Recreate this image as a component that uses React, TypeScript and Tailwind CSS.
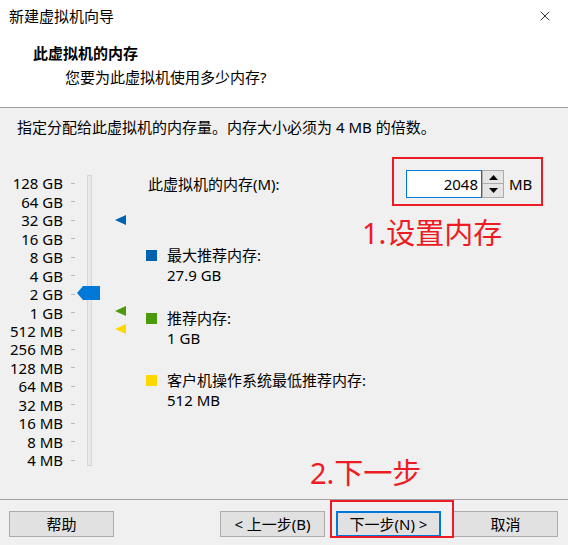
import { X } from "lucide-react";

const SCALE = [
  "128 GB",
  "64 GB",
  "32 GB",
  "16 GB",
  "8 GB",
  "4 GB",
  "2 GB",
  "1 GB",
  "512 MB",
  "256 MB",
  "128 MB",
  "64 MB",
  "32 MB",
  "16 MB",
  "8 MB",
  "4 MB",
];

const LEGEND = [
  { label: "最大推荐内存:", value: "27.9 GB", color: "bg-[#0063b1]", mt: "mt-[47px]" },
  { label: "推荐内存:", value: "1 GB", color: "bg-[#4a9a0a]", mt: "mt-[23px]" },
  { label: "客户机操作系统最低推荐内存:", value: "512 MB", color: "bg-[#ffd800]", mt: "mt-[22px]" },
];

function Marker({ color, className }: { color: string; className: string }) {
  return (
    <svg className={`absolute ${className}`} width="11" height="10" viewBox="0 0 11 10">
      <polygon points="0,5 11,0 11,10" fill={color} />
    </svg>
  );
}

function Button({ label, primary }: { label: string; primary?: boolean }) {
  return (
    <div
      className={`flex h-[26px] w-[105px] items-center justify-center bg-[#e1e1e1] text-[15px] leading-[20px] text-black ${
        primary ? "border-2 border-[#0078d7]" : "border border-[#adadad]"
      }`}
    >
      {label}
    </div>
  );
}

export default function App() {
  return (
    <div
      className="relative flex h-[545px] w-[568px] flex-col overflow-hidden bg-[#f0f0f0] text-black"
      style={{ fontFamily: '"Noto Sans", "Noto Sans CJK SC", sans-serif' }}
    >
      {/* Header */}
      <div className="h-[108px] border-b border-[#a0a0a0] bg-white">
        <div className="flex h-[32px] items-center justify-between pl-[9px] pr-[15px]">
          <span className="text-[15px] leading-[20px]">新建虚拟机向导</span>
          <X size={16} strokeWidth={1.2} className="text-black" />
        </div>
        <div className="mt-[11px] pl-[33px] text-[15px] font-bold leading-[20px]">此虚拟机的内存</div>
        <div className="mt-[4px] pl-[65px] text-[15px] leading-[20px]">您要为此虚拟机使用多少内存?</div>
      </div>

      <div className="mt-[9px] pl-[17px] text-[15px] leading-[20px]">
        指定分配给此虚拟机的内存量。内存大小必须为 4 MB 的倍数。
      </div>

      {/* Main */}
      <div className="flex h-[362px] flex-row">
        <div className="relative mt-[37px] w-[130px] self-start">
          <div className="absolute left-[87px] top-[1px] h-[291px] w-[5px] border border-[#d6d6d6] bg-[#e7eaea]" />
          {SCALE.map((s) => (
            <div key={s} className="flex h-[18.47px] items-center">
              <span className="w-[63px] whitespace-nowrap text-right text-[15px] leading-[18px]">{s}</span>
              <span className="ml-[8px] h-px w-[4px] bg-[#b9b9b9]" />
            </div>
          ))}
          <svg className="absolute left-[77px] top-[112px]" width="23" height="14" viewBox="0 0 23 14">
            <polygon points="0,7 6,0 23,0 23,14 6,14" fill="#0078d7" />
          </svg>
          <Marker color="#0063b1" className="left-[115px] top-[41px]" />
          <Marker color="#4a9a0a" className="left-[115px] top-[132px]" />
          <Marker color="#ffd800" className="left-[115px] top-[150px]" />
        </div>

        <div className="flex flex-col pl-[16px]">
          <div className="mt-[33px] flex h-[28px] items-center">
            <span className="ml-[2px] w-[258px] text-[15px] leading-[20px]">此虚拟机的内存(M):</span>
            <div className="flex h-[28px] w-[76px] items-center justify-end border border-[#0078d7] bg-white pr-[3px] text-[15px] leading-[20px]">
              2048
            </div>
            <div className="flex h-[28px] w-[22px] flex-col">
              <div className="flex h-[14px] items-center justify-center border border-[#acacac] bg-[#e5e5e5]">
                <svg width="9" height="5" viewBox="0 0 9 5">
                  <polygon points="4.5,0 9,5 0,5" fill="#000" />
                </svg>
              </div>
              <div className="flex h-[14px] items-center justify-center border border-t-0 border-[#acacac] bg-[#e5e5e5]">
                <svg width="9" height="5" viewBox="0 0 9 5">
                  <polygon points="0,0 9,0 4.5,5" fill="#000" />
                </svg>
              </div>
            </div>
            <span className="ml-[5px] text-[15px] leading-[20px]">MB</span>
          </div>

          {LEGEND.map((l) => (
            <div key={l.label} className={`flex items-start gap-[10px] ${l.mt}`}>
              <span className={`mt-[5px] h-[11px] w-[11px] ${l.color}`} />
              <div className="flex flex-col text-[15px] leading-[20px]">
                <span>{l.label}</span>
                <span>{l.value}</span>
              </div>
            </div>
          ))}
        </div>
      </div>

      {/* Footer */}
      <div className="flex flex-1 items-start border-t border-[#a0a0a0] pl-[9px] pt-[11px]">
        <Button label="帮助" />
        <div className="ml-[106px]">
          <Button label="< 上一步(B)" />
        </div>
        <div className="ml-[11px]">
          <Button label="下一步(N) >" primary />
        </div>
        <div className="ml-[12px]">
          <Button label="取消" />
        </div>
      </div>

      {/* Annotations */}
      <div className="absolute left-[392px] top-[157px] h-[49px] w-[151px] border-2 border-[#ed1c24]" />
      <div className="absolute left-[362px] top-[218px] whitespace-nowrap text-[29px] leading-[30px] text-[#ed1c24]">
        1.设置内存
      </div>
      <div className="absolute left-[310px] top-[458px] whitespace-nowrap text-[29px] leading-[30px] text-[#ed1c24]">
        2.下一步
      </div>
      <div className="absolute left-[330px] top-[500px] h-[38px] w-[124px] border-2 border-[#ed1c24]" />
    </div>
  );
}
